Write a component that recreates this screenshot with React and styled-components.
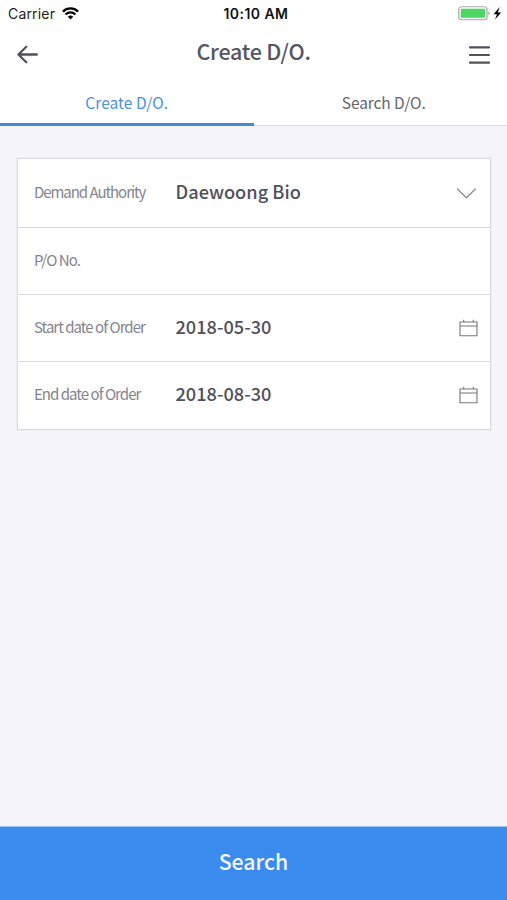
import { useState } from "react";
import styled, { createGlobalStyle } from "styled-components";

const GlobalStyle = createGlobalStyle`
  * {
    box-sizing: border-box;
  }

  body {
    margin: 0;
    background-color: #f4f4fa;
    font-family: "Noto Sans CJK KR", "Noto Sans", sans-serif;
  }

  button {
    padding: 0;
    border: none;
    background: none;
    font-family: inherit;
  }
`;

const StyledApp = styled.div`
  display: flex;
  flex-direction: column;
  height: 100vh;
  min-height: 900px;
`;

const Header = styled.header`
  background-color: #fff;
`;

const StatusBar = styled.div`
  display: grid;
  grid-template-columns: 1fr auto 1fr;
  align-items: center;
  height: 28px;
  padding: 0 5px 0 8px;
  font-family: Inter, "Liberation Sans", sans-serif;
  font-size: 14px;
  line-height: 20px;
  color: #222;
`;

const Carrier = styled.div`
  display: flex;
  align-items: center;
  gap: 7px;
  letter-spacing: 0.18px;

  svg {
    margin-top: -2px;
  }
`;

const Time = styled.div`
  padding-left: 2px;
  font-size: 14px;
  font-weight: 600;
  color: #111;
  letter-spacing: 0.45px;
`;

const Battery = styled.div`
  display: flex;
  justify-content: flex-end;
  padding-bottom: 2px;
`;

const NavBar = styled.div`
  display: flex;
  justify-content: space-between;
  align-items: center;
  height: 54px;
  padding: 0 16px;
`;

const Title = styled.h1`
  margin: 0;
  padding-bottom: 8px;
  font-size: 21.5px;
  line-height: 32px;
  font-weight: 500;
  color: #555563;
  letter-spacing: -0.25px;
`;

const IconButton = styled.button`
  display: flex;
  width: 24px;
  height: 24px;
`;

const Tabs = styled.div`
  display: grid;
  grid-template-columns: 1fr 1fr;
`;

const Tab = styled.button`
  height: 44px;
  padding: 0 0 4px ${(props) => (props.$last ? "7px" : "0")};
  font-size: 15.5px;
  line-height: 24px;
  letter-spacing: ${(props) => (props.$last ? "-0.1px" : "0.05px")};
  color: ${(props) => (props.$active ? "#4a90e6" : "#66666e")};
  box-shadow: ${(props) =>
    props.$active ? "inset 0 -3px #4489e0" : "inset 0 -1px #d9dade"};
`;

const Form = styled.div`
  margin: 32px 16px 0 17px;
  background-color: #fff;
  border: 1px solid #dcdde2;
  box-shadow: 0 0 0 0.5px #e3e4e9;
`;

const Row = styled.div`
  display: flex;
  align-items: center;
  height: ${(props) => (props.$first ? "69px" : "67px")};
  padding: 0 12px ${(props) => (props.$last ? "1px" : "0")} 16px;
  border-bottom: ${(props) => (props.$last ? "none" : "1px solid #d7d9dd")};
`;

const Label = styled.div`
  width: 141.5px;
  padding-bottom: 2px;
  font-size: 15px;
  line-height: 24px;
  color: #84848e;
  letter-spacing: ${(props) => props.$spacing};
  white-space: nowrap;
`;

const Value = styled.div`
  flex: 1;
  padding-bottom: 4px;
  font-size: 18.2px;
  line-height: 28px;
  font-weight: 500;
  color: #50505c;
`;

const Spacer = styled.div`
  flex: 1;
`;

const SearchButton = styled.button`
  height: 74px;
  padding-bottom: 5px;
  background-color: #3b8aee;
  border-top: 1px solid #9cc5f6;
  color: #f2f8ff;
  font-size: 21.3px;
  line-height: 32px;
  font-weight: 500;
`;

const tabs = ["Create D/O.", "Search D/O."];

const fields = [
  { label: "Demand Authority", value: "Daewoong Bio", icon: "chevron", spacing: "-1.05px" },
  { label: "P/O No.", value: "", spacing: "-0.9px" },
  { label: "Start date of Order", value: "2018-05-30", icon: "calendar", spacing: "-0.97px" },
  { label: "End date of Order", value: "2018-08-30", icon: "calendar", spacing: "-0.97px" },
];

function WifiIcon() {
  return (
    <svg width="17" height="13" viewBox="0 0 17 13" fill="none" stroke="#000">
      <path d="M0.9 4.6a10.8 10.8 0 0 1 15.2 0" strokeWidth="2.2" />
      <path d="M3.6 7.4a7 7 0 0 1 9.8 0" strokeWidth="2.1" />
      <path d="M8.5 12.6L5.8 9.8a3.9 3.9 0 0 1 5.4 0z" fill="#000" stroke="none" />
    </svg>
  );
}

function BatteryIcon() {
  return (
    <svg width="44" height="16" viewBox="0 0 44 16">
      <rect x="0.75" y="1.75" width="28.3" height="13" rx="3" fill="#fff" stroke="#a9a9ab" strokeWidth="1.2" />
      <rect x="2.7" y="3.7" width="24.4" height="9.1" rx="1" fill="#4cd763" />
      <path d="M30.4 6c1.7.5 1.7 4 0 4.5z" fill="#a9a9ab" />
      <path d="M41.6 2L35.6 9.2H39L37 14.6L43.2 7.4H39.9z" fill="#000" />
    </svg>
  );
}

function BackIcon() {
  return (
    <svg width="24" height="24" viewBox="0 0 24 24" fill="none" stroke="#50505f" strokeWidth="2.3" strokeLinecap="round" strokeLinejoin="round">
      <path d="M10.3 3.8L2.4 11.5L10.3 19.2M2.4 11.5H20.8" />
    </svg>
  );
}

function MenuIcon() {
  return (
    <svg width="24" height="24" viewBox="0 0 24 24" stroke="#50505f" strokeWidth="2.2" strokeLinecap="round">
      <path d="M3 4.3H22M3 12H22M3 19.7H22" />
    </svg>
  );
}

function ChevronIcon() {
  return (
    <svg width="24" height="14" viewBox="0 0 24 14" fill="none" stroke="#8b8b8f" strokeWidth="1.3">
      <path d="M3.2 2.8L12.4 11.8L21.6 2.8" />
    </svg>
  );
}

function CalendarIcon() {
  return (
    <svg width="19" height="18" viewBox="0 0 19 18" fill="none" stroke="#77777b" strokeWidth="1.1">
      <path d="M1 3H18V16.7H1zM1 7H18M4.7 0.8V3M14.3 0.8V3" />
    </svg>
  );
}

export default function App() {
  const [activeTab, setActiveTab] = useState(0);

  return (
    <>
      <GlobalStyle />
      <StyledApp>
        <Header>
          <StatusBar>
            <Carrier>
              Carrier <WifiIcon />
            </Carrier>
            <Time>10:10 AM</Time>
            <Battery>
              <BatteryIcon />
            </Battery>
          </StatusBar>
          <NavBar>
            <IconButton aria-label="Back">
              <BackIcon />
            </IconButton>
            <Title>Create D/O.</Title>
            <IconButton aria-label="Menu">
              <MenuIcon />
            </IconButton>
          </NavBar>
          <Tabs>
            {tabs.map((tab, i) => (
              <Tab
                key={tab}
                $active={i === activeTab}
                $last={i === tabs.length - 1}
                onClick={() => setActiveTab(i)}
              >
                {tab}
              </Tab>
            ))}
          </Tabs>
        </Header>

        <Form>
          {fields.map((field, i) => (
            <Row key={field.label} $first={i === 0} $last={i === fields.length - 1}>
              <Label $spacing={field.spacing}>{field.label}</Label>
              <Value>{field.value}</Value>
              {field.icon === "chevron" && <ChevronIcon />}
              {field.icon === "calendar" && <CalendarIcon />}
            </Row>
          ))}
        </Form>
        <Spacer />
        <SearchButton>Search</SearchButton>
      </StyledApp>
    </>
  );
}
